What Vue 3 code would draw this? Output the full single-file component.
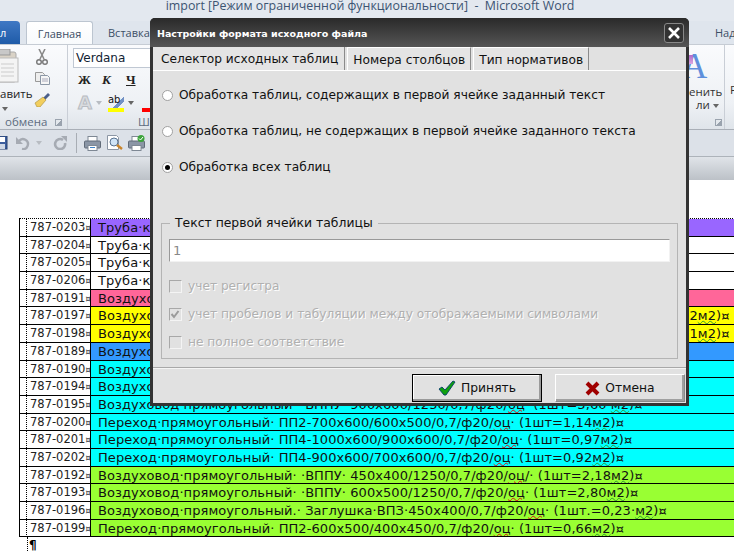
<script setup>
const rows = [
  ['787-0203', 'Труба·круглая·оцинкованная·', '#9966ff'],
  ['787-0204', 'Труба·круглая·оцинкованная·', '#fff'],
  ['787-0205', 'Труба·круглая·оцинкованная·', '#fff'],
  ['787-0206', 'Труба·круглая·оцинкованная·', '#fff'],
  ['787-0191', 'Воздуховод·круглый·', '#ff6699'],
  ['787-0197', 'Воздуховод·прямоугольный·с·фланцем·· ·ВППУ· 1000х800/1250/0,7/ф20/оц· (1шт=4,52м2)¤', '#ffff00'],
  ['787-0198', 'Воздуховод·прямоугольный·с·фланцем·· ·ВППУ· 1000х600/1250/0,7/ф20/оц· (1шт=4,01м2)¤', '#ffff00'],
  ['787-0189', 'Воздуховод·круглый·', '#3399ff'],
  ['787-0190', 'Воздуховод·прямоугольный·', '#00ffff'],
  ['787-0194', 'Воздуховод·прямоугольный·', '#00ffff'],
  ['787-0195', 'Воздуховод·прямоугольный· ·ВППУ· 900х600/1250/0,7/ф20/оц· (1шт=3,60·м2)¤', '#00ffff'],
  ['787-0200', 'Переход·прямоугольный· ПП2-700х600/600х500/0,7/ф20/оц· (1шт=1,14м2)¤', '#00ffff'],
  ['787-0201', 'Переход·прямоугольный· ПП4-1000х600/900х600/0,7/ф20/оц· (1шт=0,97м2)¤', '#00ffff'],
  ['787-0202', 'Переход·прямоугольный· ПП4-900х600/700х600/0,7/ф20/оц· (1шт=0,92м2)¤', '#00ffff'],
  ['787-0192', 'Воздуховод·прямоугольный· ·ВППУ· 450х400/1250/0,7/ф20/оц/· (1шт=2,18м2)¤', '#99ff33'],
  ['787-0193', 'Воздуховод·прямоугольный· ·ВППУ· 600х500/1250/0,7/ф20/оц· (1шт=2,80м2)¤', '#99ff33'],
  ['787-0196', 'Воздуховод·прямоугольный.· Заглушка·ВПЗ·450х400/0,7/ф20/оц· (1шт.=0,23·м2)¤', '#99ff33'],
  ['787-0199', 'Переход·прямоугольный· ПП2-600х500/400х450/0,7/ф20/оц· (1шт=0,66м2)¤', '#99ff33'],
]
const parts = (t) => t.split(/(оц|м2)/)
const radios = [
  { label: 'Обработка таблиц, содержащих в первой ячейке заданный текст', on: false },
  { label: 'Обработка таблиц, не содержащих в первой ячейке заданного текста', on: false },
  { label: 'Обработка всех таблиц', on: true },
]
const checks = [
  { label: 'учет регистра', on: false },
  { label: 'учет пробелов и табуляции между отображаемыми символами', on: true },
  { label: 'не полное соответствие', on: false },
]
</script>

<template>
  <div class="page">
    <header class="titlebar">import [Режим ограниченной функциональности]&nbsp; -&nbsp; Microsoft Word</header>
    <nav class="tabs">
      <span class="file">л</span>
      <span class="tab active">Главная</span>
      <span class="tab">Вставка</span>
      <span class="tab right">Над</span>
    </nav>
    <section class="ribbon">
      <div class="group clip">
        <div class="paste">
          <svg width="19" height="34" viewBox="0 0 19 34">
            <rect x="-8" y="3" width="24" height="30" rx="2" fill="#d9d2c6" stroke="#aaa" />
            <rect x="-2" y="0" width="12" height="6" fill="#c8c8c8" stroke="#999" />
            <rect x="-2" y="9" width="20" height="24" fill="#f4f4f4" stroke="#bbb" />
            <path d="M1 15h13M1 19h13M1 23h13M1 27h13" stroke="#ccc" />
          </svg>
          <span class="paste-label">авить</span>
          <span class="caret paste-caret"></span>
        </div>
        <div class="clip-tools">
          <svg width="14" height="16" viewBox="0 0 14 16"><path d="M4 0l5 10M10 0L5 10" stroke="#8a8a8a" stroke-width="1.6" fill="none"/><circle cx="4" cy="13" r="2.3" fill="none" stroke="#777" stroke-width="1.4"/><circle cx="10" cy="13" r="2.3" fill="none" stroke="#777" stroke-width="1.4"/></svg>
          <svg width="15" height="13" viewBox="0 0 15 13"><path d="M.5.5h7l2 2v7h-9z" fill="#eee" stroke="#999"/><path d="M5.500 3.500h7l2 2v7h-9z" fill="#f6f6f6" stroke="#8b97a6"/><path d="M7 7h6M7 9h6" stroke="#aab"/></svg>
          <svg width="17" height="15" viewBox="0 0 17 15"><path d="M9 6l5-5 2 2-5 5z" fill="#4a5f8a"/><path d="M1 11l8-6 3 3-6 7H3z" fill="#f2ce5e" stroke="#a58b3a" stroke-width=".6"/></svg>
        </div>
        <div class="group-label clip-label"><span>обмена</span><i class="launcher"></i></div>
      </div>
      <div class="group font">
        <div class="combo">Verdana</div>
        <div class="fmt">
          <b class="fb">Ж</b><b class="fb it">К</b><b class="fb ul">Ч</b>
        </div>
        <div class="fmt2">
          <span class="ghost-a">A</span><i class="caret pale"></i>
          <span class="hl"><span class="ab">ab</span><i class="hl-bar"></i></span><i class="caret"></i>
          <span class="redbar"></span>
        </div>
        <div class="group-label font-label">Шр</div>
      </div>
      <div class="spacer"></div>
      <div class="group styles">
        <span class="big-a">A</span>
        <span class="st1">енить</span>
        <span class="st2">ли <i class="caret"></i></span>
        <i class="launcher st3"></i>
      </div>
      <div class="group last"><span>Р</span></div>
    </section>
    <section class="qat">
      <svg class="ic save" width="8" height="14" viewBox="0 0 8 14"><rect x="-6" y="0" width="13" height="13" fill="#3d5f9e" stroke="#27406f"/><rect x="-4" y="1" width="9" height="5" fill="#fff"/><rect x="-3" y="8" width="8" height="5" fill="#cfd8e6"/></svg>
      <svg class="ic undo" width="14" height="14" viewBox="0 0 14 14"><path d="M3 5a5 5 0 1 1 3 8" fill="none" stroke="#a6abb3" stroke-width="2.400"/><path d="M0 1v7h7z" fill="#a6abb3"/></svg>
      <i class="caret pale qcaret"></i>
      <svg class="ic redo" width="14" height="14" viewBox="0 0 14 14"><path d="M10 4a5 5 0 1 0 2 3" fill="none" stroke="#a6abb3" stroke-width="2.600"/><path d="M8 0h6v6z" fill="#a6abb3"/></svg>
      <i class="qsep"></i>
      <svg class="ic print" width="17" height="15" viewBox="0 0 17 15"><rect x="4" y="0.500" width="9" height="5" fill="#fff" stroke="#7e8894"/><rect x="0.500" y="5" width="16" height="7" rx="1" fill="#8b96a6" stroke="#616b78"/><rect x="4" y="9.500" width="9" height="5" fill="#fff" stroke="#7e8894"/><path d="M6 11.500h5" stroke="#3c82c8"/></svg>
      <svg class="ic prev" width="16" height="16" viewBox="0 0 16 16"><path d="M.5.500h9l2 2v12h-11z" fill="#fff" stroke="#8c96a4"/><circle cx="7" cy="7" r="4" fill="#cfe4f7" stroke="#58718f"/><path d="M10 10l5 4" stroke="#c9852c" stroke-width="2.400"/></svg>
      <svg class="ic print2" width="17" height="16" viewBox="0 0 17 16"><rect x="4" y="1.500" width="9" height="5" fill="#fff" stroke="#7e8894"/><rect x="0.500" y="6" width="16" height="7" rx="1" fill="#8b96a6" stroke="#616b78"/><rect x="4" y="10.500" width="9" height="5" fill="#fff" stroke="#7e8894"/><circle cx="13" cy="3.500" r="3.500" fill="#3ca43c"/><path d="M11 3.500l1.500 1.500 2.500-3" stroke="#fff" fill="none"/></svg>
      <i class="qsep"></i>
    </section>
    <section class="ruler"></section>
    <main class="doc">
      <div class="table">
        <div v-for="r in rows" :key="r[0]" class="row">
          <div class="c0"></div>
          <div class="c1">{{ r[0] }}<span class="mark">¤</span></div>
          <div class="c2" :style="{ background: r[2] }">
            <template v-for="(p, i) in parts(r[1])" :key="i">
              <span v-if="p === 'оц'" class="red">{{ p }}</span>
              <span v-else-if="p === 'м2'" class="green">{{ p }}</span>
              <template v-else>{{ p }}</template>
            </template>
          </div>
        </div>
      </div>
      <div class="para">¶</div>
    </main>

    <div class="dialog">
      <div class="dlg-title">
        <span>Настройки формата исходного файла</span>
        <button class="close" type="button">
          <svg width="14" height="14" viewBox="0 0 14 14"><path d="M2 2l10 10M12 2L2 12" stroke="#fff" stroke-width="2.600"/></svg>
        </button>
      </div>
      <div class="dlg-body">
        <div class="dlg-tabs">
          <span class="dtab on">Селектор исходных таблиц</span>
          <span class="dtab">Номера столбцов</span>
          <span class="dtab">Тип нормативов</span>
        </div>
        <div class="panel">
          <div class="radios">
            <label v-for="r in radios" :key="r.label" class="radio">
              <i class="dot" :class="{ on: r.on }"></i>{{ r.label }}
            </label>
          </div>
          <fieldset class="gbox">
            <legend>Текст первой ячейки таблицы</legend>
            <div class="input">1</div>
            <div class="checks">
              <div v-for="c in checks" :key="c.label" class="check">
                <i class="box">
                  <svg v-if="c.on" width="12" height="12" viewBox="0 0 12 12"><path d="M2.500 6l2.500 3 4.500-6" fill="none" stroke="#9a9a9a" stroke-width="2"/></svg>
                </i>
                <span>{{ c.label }}</span>
              </div>
            </div>
          </fieldset>
        </div>
        <div class="footer">
          <button class="btn def" type="button">
            <svg width="18" height="16" viewBox="0 0 18 16"><path d="M1 9l3-2 3 3 8-9 2 1-9 13H6z" fill="#0fa00f" stroke="#053c6b" stroke-width=".9"/></svg>
            Принять
          </button>
          <button class="btn" type="button">
            <svg width="15" height="15" viewBox="0 0 15 15"><path d="M2 2l11 11M13 2L2 13" stroke="#a00000" stroke-width="4"/></svg>
            Отмена
          </button>
        </div>
      </div>
    </div>
  </div>
</template>

<style scoped>
.page { position: relative; width: 734px; height: 552px; overflow: hidden; background: #fff; font-family: "DejaVu Sans", sans-serif; color: #000; }
.titlebar { height: 21px; background: #e3e8ef; text-align: center; font: 12.400px/11px "Open Sans", sans-serif; color: #3c5472; box-sizing: border-box; padding-left: 6px; }
.tabs { height: 23px; background: #dfe5ed; display: flex; align-items: flex-end; font: 11px "Open Sans", sans-serif; color: #3d4f66; position: relative; }
.file { width: 20px; height: 23px; box-sizing: border-box; background: linear-gradient(#3f78c4, #1f5ba8); border-radius: 0 4px 0 0; color: #fff; text-align: left; padding: 4px 0 0 0; }
.tab { height: 23px; box-sizing: border-box; padding-top: 4px; }
.tab.active { margin-left: 6px; width: 67px; text-align: center; background: linear-gradient(#fff, #f8fafc); border: 1px solid #bcc5d0; border-bottom: 0; border-radius: 3px 3px 0 0; }
.tab:nth-child(3) { margin-left: 15px; }
.tab.right { margin-left: auto; width: 19px; overflow: hidden; white-space: nowrap; padding-top: 4px; }
.ribbon { height: 86px; box-sizing: border-box; display: flex; background: linear-gradient(#fafbfd, #eef1f5 70%, #dfe4ea); border-top: 1px solid #c6ccd4; border-bottom: 1px solid #a9afb7; font: 11.500px "Open Sans", sans-serif; color: #3f4c5c; }
.group { position: relative; height: 100%; box-sizing: border-box; border-right: 1px solid #c9ced6; }
.clip { width: 68px; }
.paste { position: absolute; left: 0; top: 4px; width: 30px; }
.paste-label { position: absolute; left: 0; top: 38px; width: 28px; text-align: right; color: #222; line-height: 14px; }
.caret { display: inline-block; width: 0; height: 0; border: 3px solid transparent; border-top: 4px solid #666; border-bottom: 0; vertical-align: middle; }
.caret.pale { border-top-color: #b8bcc2; }
.paste-caret { position: absolute; left: 2px; top: 58px; }
.clip-tools { position: absolute; left: 34px; top: 4px; display: flex; flex-direction: column; align-items: center; gap: 7px; width: 16px; }
.group-label { position: absolute; bottom: 0; color: #5d6c7f; line-height: 14px; }
.clip-label { left: 5px; right: 5px; display: flex; justify-content: space-between; align-items: center; }
.launcher { display: block; width: 6px; height: 6px; border: 1px solid #9aa3ae; border-width: 1px 0 0 1px; background: linear-gradient(135deg, transparent 50%, #9aa3ae 50%); }
.font { width: 120px; }
.combo { position: absolute; left: 5px; top: 3px; width: 78px; height: 20px; box-sizing: border-box; background: #fff; border: 1px solid #c0c8d3; font: 12px/18px "DejaVu Sans", sans-serif; color: #123; padding-left: 2px; }
.fmt { position: absolute; left: 10px; top: 27px; display: flex; gap: 14px; font: bold 13px "Liberation Serif", serif; color: #222; }
.fb { width: 10px; }
.it { font-style: italic; }
.ul { text-decoration: underline; }
.fmt2 { position: absolute; left: 10px; top: 49px; display: flex; align-items: center; gap: 4px; }
.ghost-a { font: bold 18px/18px "DejaVu Sans", sans-serif; color: #d9dbdf; -webkit-text-stroke: 1px #b8bcc2; }
.hl { margin-left: 2px; width: 16px; height: 18px; position: relative; font: 10px/11px "DejaVu Sans", sans-serif; color: #111; background: linear-gradient(135deg, transparent 55%, #7391c5 55%, #7391c5 70%, transparent 70%); }
.ab { position: absolute; left: 0; top: 0; }
.hl-bar { position: absolute; left: 0; right: 0; bottom: 0; height: 4px; background: #ffff00; }
.redbar { width: 8px; height: 4px; background: #ff0000; margin-left: 4px; align-self: flex-end; }
.font-label { left: 70px; }
.spacer { flex: 1; }
.styles { width: 38px; }
.big-a { position: absolute; left: -5px; top: 4px; font: 35px/35px "Liberation Serif", serif; color: #5f90dc; }
.big-a::before { content: ""; position: absolute; left: 6px; top: 6px; width: 5px; height: 9px; background: linear-gradient(#b06ac8, #d9a6e0); }
.st1, .st2 { position: absolute; left: 2px; color: #333; line-height: 14px; }
.st1 { top: 40px; }
.st2 { top: 53px; left: 9px; }
.st3 { position: absolute; left: 28px; top: 74px; }
.last { width: 9px; border-right: 0; padding: 38px 0 0 5px; overflow: hidden; color: #333; line-height: 14px; }
.qat { height: 27px; box-sizing: border-box; background: #dce1e8; border-bottom: 1px solid #adb3ba; display: flex; align-items: center; }
.ic { flex: none; }
.save { margin-right: 8px; }
.qcaret { margin: 0 11px 0 6px; }
.qsep { width: 1px; height: 20px; background: #a8adb4; margin: 0 7px 0 9px; }
.prev { margin: 0 5px 0 6px; }
.ruler { height: 23px; background: linear-gradient(#e0e4e9, #bcc1c7); }
.doc { padding: 38px 0 0 19px; position: relative; }
.table { width: 760px; border-left: 1px solid #000; border-top: 1px dotted #000; box-sizing: border-box; position: relative; }
.row { display: grid; grid-template-columns: 7px 63px 1fr; height: 17.7px; box-sizing: border-box; border-bottom: 1px solid #000; overflow: hidden; white-space: nowrap; }
.c0 { border-right: 1px dotted #000; }
.c1 { font: 11.500px/17px "DejaVu Sans", sans-serif; padding-left: 3px; color: #222; overflow: hidden; }
.mark { font-size: 8px; }
.c2 { font: 13px/17px "DejaVu Sans", sans-serif; letter-spacing: .07px; padding-left: 7px; border-left: 1px solid #000; color: #111; }
.red { text-decoration: underline wavy #e01010 1px; text-underline-offset: 0; }
.green { text-decoration: underline wavy #2f9a2f 1px; text-underline-offset: 0; }
.para { margin-left: 8px; border-left: 1px dotted #000; padding-left: 1px; font: bold 12px/16px "DejaVu Sans", sans-serif; height: 20px; }
.dialog { position: absolute; left: 150px; top: 18px; width: 539px; height: 388px; box-sizing: border-box; background: #3a3a3a; border: 3px solid #333; border-top: 0; border-radius: 5px 5px 0 0; display: flex; flex-direction: column; }
.dlg-title { height: 29px; flex: none; margin: 0 -3px; padding: 0 5px 0 7px; background: linear-gradient(#2a2a2a, #555); border-radius: 5px 5px 0 0; display: flex; align-items: center; justify-content: space-between; color: #fff; font: bold 9.500px "DejaVu Sans", sans-serif; }
.dlg-title span { padding-top: 2px; }
.close { width: 20px; height: 20px; padding: 0; background: #333; border: 1px solid #888; border-radius: 3px; display: flex; align-items: center; justify-content: center; }
.dlg-body { flex: 1; background: #e1e1e1; display: flex; flex-direction: column; min-height: 0; }
.dlg-tabs { height: 24px; flex: none; display: flex; gap: 2px; font: 12.200px/25px "DejaVu Sans", sans-serif; color: #111; border-bottom: 1px solid #fff; box-sizing: border-box; }
.dtab { padding: 0 5px; border: 1px solid #fff; border-right-color: #8a8a8a; border-bottom: 0; background: #e4e4e4; }
.dtab.on { padding: 0 6px 0 8px; border: 0; border-right: 1px solid #8a8a8a; }
.panel { flex: 1; padding: 0 8px; min-height: 0; }
.radios { display: flex; flex-direction: column; gap: 22px; padding: 17px 0 0 1px; height: 145px; box-sizing: border-box; }
.radio { display: flex; align-items: center; gap: 6px; height: 14px; font: 12.200px/14px "DejaVu Sans", sans-serif; color: #111; }
.dot { border-radius: 50%; background: #fff; border: 1px solid #a0a0a0; box-sizing: content-box; flex: none; position: relative; width: 9px; height: 9px; }
.dot.on::after { content: ""; position: absolute; left: 2px; top: 2px; width: 5px; height: 5px; border-radius: 50%; background: #000; }
.gbox { margin: 0; height: 143px; box-sizing: border-box; border: 1px solid #b4b4b4; padding: 0 7px; }
legend { margin-left: 1px; padding: 0 5px; font: 12.400px/14px "DejaVu Sans", sans-serif; color: #111; }
.input { height: 23px; box-sizing: border-box; margin-top: 9px; background: #fff; border: 1px solid #f2f2f2; border-top: 1px solid #999; border-left: 1px solid #999; font: 13px/21px "DejaVu Sans", sans-serif; color: #888; padding-left: 3px; }
.checks { display: flex; flex-direction: column; gap: 14px; margin-top: 17px; }
.check { display: flex; align-items: center; gap: 6px; height: 14px; font: 12.200px/14px "DejaVu Sans", sans-serif; color: #b0b0b0; text-shadow: 1px 1px 0 #fff; }
.box { width: 11px; height: 11px; flex: none; border: 1px solid #a8a8a8; border-right-color: #f4f4f4; border-bottom-color: #f4f4f4; background: #e1e1e1; display: block; }
.box svg { display: block; margin: -1px 0 0 -1px; }
.footer { height: 36px; flex: none; border-top: 1px solid #a8a8a8; box-shadow: 0 1px 0 #f4f4f4 inset; display: flex; justify-content: flex-end; gap: 13px; padding: 6px 1px 0 0; box-sizing: border-box; }
.btn { width: 130px; height: 28px; box-sizing: border-box; background: #e1e1e1; border: 1px solid; border-color: #fff #8a8a8a #8a8a8a #fff; box-shadow: -2px -2px 0 #a0a0a0 inset; display: flex; align-items: center; justify-content: center; gap: 5px; font: 12.300px "DejaVu Sans", sans-serif; color: #111; padding: 0; }
.btn.def { border: 1px solid #000; box-shadow: -2px -2px 0 #9a9a9a inset, 1px 1px 0 #fff inset; }
</style>

<style>
html, body { margin: 0; background: #fff; }
</style>
